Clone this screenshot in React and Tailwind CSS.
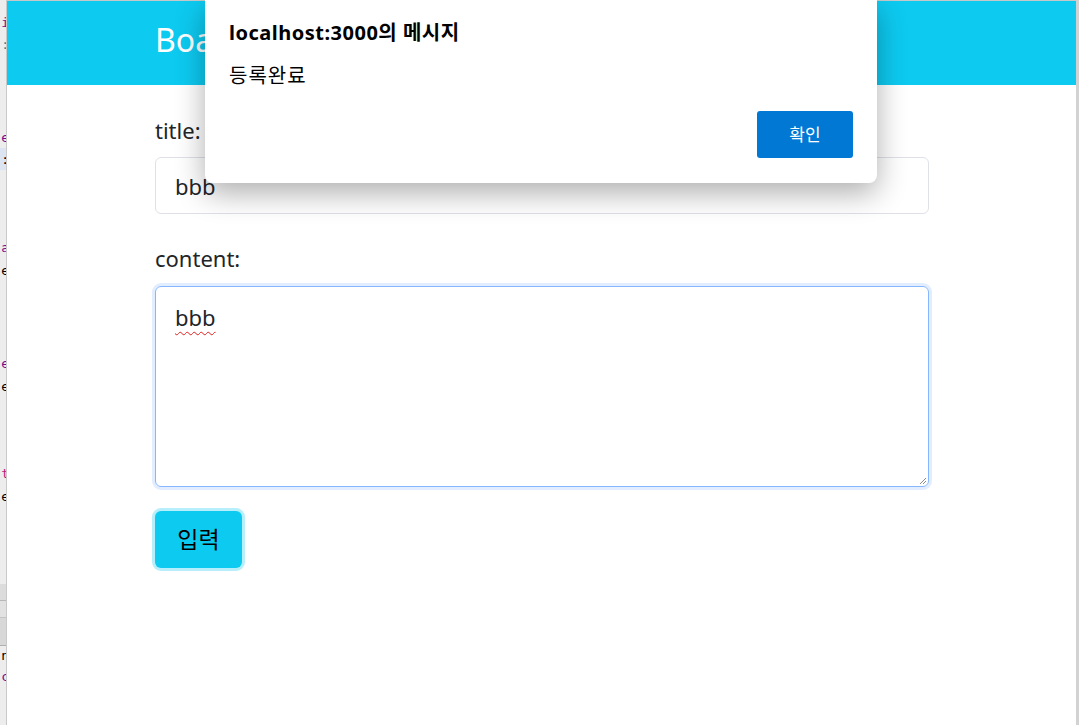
import React from "react";

const codeBits = [
  { h: 12 },
  { h: 20, t: "i", c: "text-[#7a0a8c]" },
  { h: 24, t: ":", c: "text-[#1c8c8c]" },
  { h: 70 },
  { h: 22, t: "e", c: "text-[#7a0a8c]" },
  { h: 22, t: ":", c: "text-black", bg: "bg-[#dbe4f0]" },
  { h: 66 },
  { h: 22, t: "a", c: "text-[#7a0a8c]" },
  { h: 24, t: "e", c: "text-black" },
  { h: 70 },
  { h: 22, t: "e", c: "text-[#7a0a8c]" },
  { h: 24, t: "e", c: "text-black" },
  { h: 64 },
  { h: 22, t: "t", c: "text-[#c0187a]" },
  { h: 24, t: "e", c: "text-black" },
];

function CodeStrip() {
  return (
    <div className="w-[7px] shrink-0 overflow-hidden bg-[#ededed] border-r border-[#c9c9c9] flex flex-col font-['DejaVu_Sans_Mono',monospace] text-[13px]">
      {codeBits.map((b, i) => (
        <div
          key={i}
          style={{ height: b.h }}
          className={`flex items-center justify-end leading-none ${b.bg || ""}`}
        >
          {b.t && <span className={`${b.c} -mr-[3px]`}>{b.t}</span>}
        </div>
      ))}
      <div className="h-[76px]" />
      <div className="h-[17px] bg-[#dcdcdc] border-b border-[#b8b8b8]" />
      <div className="h-[17px] bg-[#e2e2e2] border-b border-[#c4c4c4]" />
      <div className="h-[28px] bg-[#d8d8d8] border-b border-[#b0b0b0]" />
      <div className="h-[20px] flex items-center justify-end">
        <span className="text-black -mr-[3px]">n</span>
      </div>
      <div className="h-[22px] flex items-center justify-end">
        <span className="text-[#7a0a8c] -mr-[3px]">c</span>
      </div>
    </div>
  );
}

function AlertDialog() {
  return (
    <div className="absolute left-[205px] top-0 w-[672px] h-[183px] bg-white rounded-b-[8px] shadow-[0_10px_30px_rgba(0,0,0,0.32)] px-6 pt-[18px] font-['Noto_Sans','Noto_Sans_CJK_KR',sans-serif] text-black">
      <div className="text-[20px] font-bold leading-[30px] tracking-[0.5px]">localhost:3000의 메시지</div>
      <div className="mt-[14px] text-[20px] leading-[28px] tracking-[1px]">등록완료</div>
      <div className="flex justify-end mt-[21px]">
        <button className="w-[96px] h-[47px] bg-[#0078d4] text-white text-[17px] rounded-[3px]">
          확인
        </button>
      </div>
    </div>
  );
}

export default function App() {
  return (
    <div className="relative w-[1079px] h-[725px] overflow-hidden flex bg-white font-['Noto_Sans','Noto_Sans_CJK_KR',sans-serif] text-[#212529]">
      <CodeStrip />
      <main className="flex-1 flex flex-col border-t border-[#c8c8c8]">
        <header className="h-[84px] bg-[#0dcaf0] flex items-center pl-[148px]">
          <h2 className="text-white text-[32px] font-normal leading-none pb-[6px]">Board</h2>
        </header>
        <section className="pl-[148px] w-[922px] flex flex-col">
          <label className="mt-[30px] text-[22px] leading-[30px]">title:</label>
          <input
            readOnly
            value="bbb"
            className="mt-[12px] h-[57px] w-full border border-[#dee2e6] rounded-[6px] px-[19px] text-[22px] text-[#212529] outline-none bg-white"
          />
          <label className="mt-[29px] text-[22px] leading-[30px]">content:</label>
          <div className="relative mt-[13px] h-[201px] w-full border border-[#86b7fe] rounded-[6px] shadow-[0_0_0_3px_rgba(13,110,253,0.12)] px-[19px] pt-[14px] text-[22px] leading-[32px]">
            <span className="underline decoration-wavy decoration-[#e02020] decoration-1 underline-offset-[5px]">bbb</span>
            <svg className="absolute right-[1px] bottom-[1px]" width="10" height="10" viewBox="0 0 10 10">
              <path d="M9 3 L3 9 M9 6 L6 9" stroke="#8a8a8a" strokeWidth="1" />
            </svg>
          </div>
          <div className="mt-[24px]">
            <button className="h-[57px] w-[87px] bg-[#0dcaf0] rounded-[6px] ring-[3px] ring-[#b6effb] text-black text-[23px]">
              입력
            </button>
          </div>
        </section>
      </main>
      <div className="w-[3px] shrink-0 bg-[#d2d2d2]" />
      <AlertDialog />
    </div>
  );
}
